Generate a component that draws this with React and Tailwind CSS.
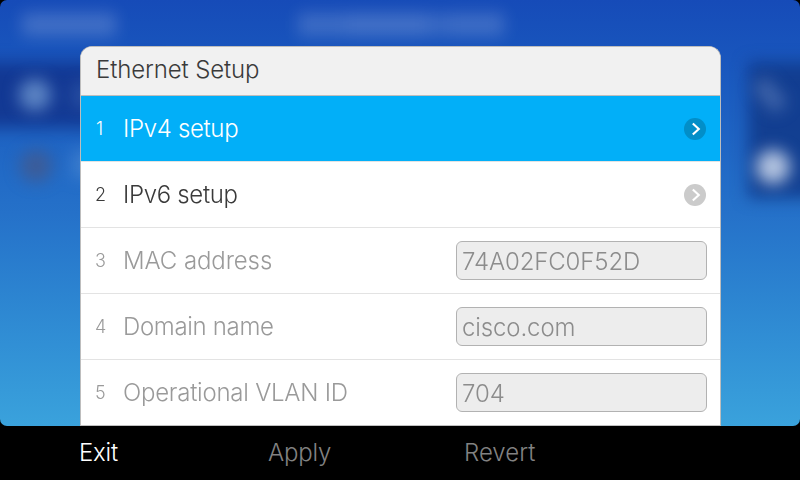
const rows = [
  { n: 1, label: "IPv4 setup", kind: "link", selected: true, tracking: "tracking-[-0.33px]" },
  { n: 2, label: "IPv6 setup", kind: "link", tracking: "tracking-[-0.33px]" },
  { n: 3, label: "MAC address", kind: "field", value: "74A02FC0F52D", tracking: "tracking-[-0.1px]" },
  { n: 4, label: "Domain name", kind: "field", value: "cisco.com", tracking: "tracking-[-0.33px]" },
  { n: 5, label: "Operational VLAN ID", kind: "field", value: "704", tracking: "tracking-[-0.24px]" },
];

function Chevron({ selected }) {
  return (
    <svg className="mr-[14px] size-[22px] shrink-0" viewBox="0 0 22 22">
      <circle cx="11" cy="11" r="11" fill={selected ? "#028ec8" : "#cbcbcb"} />
      <path d="M8.8 5.4L14.8 11L8.8 16.6" fill="none" stroke="#fff" strokeWidth="2.1" />
    </svg>
  );
}

function Row({ row }) {
  const tone = row.selected
    ? "bg-[#02aff8] text-white"
    : row.kind === "link"
      ? "bg-white text-[#3a3a3a]"
      : "bg-white text-[#9a9a9a]";
  const line = row.n === 5 ? "border-[#c0c0c0]" : "border-[#e3e3e3]";
  return (
    <li className={`flex h-[66px] items-center border-b ${line} ${tone}`}>
      <span className={`w-[42px] text-[18px] leading-none ${row.n === 1 ? "pl-[15px]" : "pl-[14px]"}`}>
        {row.n}
      </span>
      <span className={`grow text-[24px] leading-none ${row.tracking}`}>{row.label}</span>
      {row.kind === "link" ? (
        <Chevron selected={row.selected} />
      ) : (
        <span className="mr-[13px] flex h-[39px] w-[251px] items-center rounded-[6px] border border-[#b2b2b2] bg-[#ededed] pt-[2px] pl-[5px] text-[24px] leading-none tracking-[-0.12px] text-[#8c8c8c]">
          {row.value}
        </span>
      )}
    </li>
  );
}

// Out-of-focus home screen behind the dialog.
function Backdrop() {
  return (
    <svg className="absolute inset-0 size-full" viewBox="0 0 800 426">
      <defs>
        <filter id="soft" filterUnits="userSpaceOnUse" x="-100" y="-60" width="1000" height="500" colorInterpolationFilters="sRGB">
          <feGaussianBlur stdDeviation="8" />
        </filter>
      </defs>
      <g filter="url(#soft)">
        <rect x="-40" y="62" width="200" height="66" fill="#103088" opacity=".8" />
        <rect x="748" y="62" width="100" height="136" fill="#103888" opacity=".85" />
      </g>
      <g filter="url(#soft)" fill="#fff">
        <rect x="22" y="13" width="94" height="23" opacity=".18" />
        <rect x="298" y="13" width="48" height="23" opacity=".16" />
        <rect x="346" y="13" width="82" height="23" opacity=".19" />
        <rect x="428" y="13" width="22" height="23" opacity=".14" />
        <rect x="450" y="13" width="54" height="23" opacity=".17" />
      </g>
      <g filter="url(#soft)">
        <circle cx="35" cy="95" r="16" fill="#6a92cc" opacity=".85" />
        <rect x="72" y="82" width="30" height="26" fill="#7fa6d8" opacity=".2" />
        <circle cx="36" cy="166" r="16" fill="#46588a" opacity=".75" />
        <rect x="72" y="150" width="30" height="28" fill="#6fa4e0" opacity=".35" />
        <path d="M759 82L781 108" stroke="#6f8cc4" strokeWidth="18" opacity=".5" />
        <circle cx="773" cy="167" r="17" fill="#bccae4" opacity=".95" />
      </g>
    </svg>
  );
}

export default function App() {
  return (
    <div className="flex h-[480px] w-[800px] flex-col overflow-hidden bg-black font-['Inter','Liberation_Sans',sans-serif] font-light">
      <main className="relative h-[426px] overflow-hidden rounded-[7px] bg-linear-to-b from-[#164bb8] via-[#2571c9] to-[#3aa2dc] pt-[46px] pl-[80px]">
        <Backdrop />
        <section className="relative w-[641px] overflow-hidden rounded-t-[12px] border border-b-0 border-[#bdbdbd] bg-white">
          <h1 className="flex h-[49px] items-center border-b border-[#bdbdbd] bg-[#f1f1f1] pb-[2px] pl-[15px] text-[24px] leading-none tracking-[-0.12px] text-[#3a3a3a]">
            Ethernet Setup
          </h1>
          <ul>
            {rows.map((row) => (
              <Row key={row.n} row={row} />
            ))}
          </ul>
        </section>
      </main>
      <footer className="flex h-[54px] items-center pb-px pl-[79px] text-[24px] leading-none tracking-[-0.2px] text-[#828282]">
        <span className="w-[189px] text-white">Exit</span>
        <span className="w-[196px]">Apply</span>
        <span className="tracking-normal">Revert</span>
      </footer>
    </div>
  );
}
